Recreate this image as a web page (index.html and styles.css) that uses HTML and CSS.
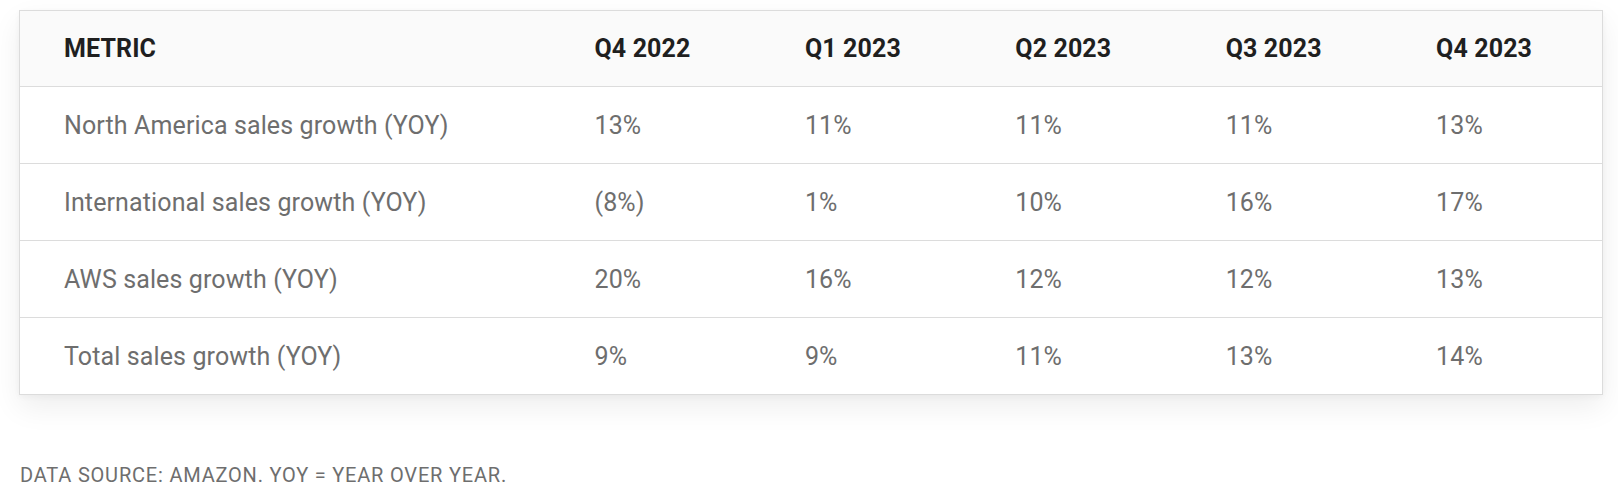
FILE: index.html
```html
<!DOCTYPE html>
<html lang="en">
<head>
<meta charset="utf-8">
<title>Amazon sales growth</title>
<link rel="stylesheet" href="styles.css">
</head>
<body>
<div class="card">
  <table class="data-table">
    <colgroup>
      <col class="col-metric">
      <col><col><col><col><col>
    </colgroup>
    <thead>
      <tr>
        <th>METRIC</th>
        <th>Q4 2022</th>
        <th>Q1 2023</th>
        <th>Q2 2023</th>
        <th>Q3 2023</th>
        <th>Q4 2023</th>
      </tr>
    </thead>
    <tbody>
      <tr>
        <td>North America sales growth (YOY)</td>
        <td>13%</td><td>11%</td><td>11%</td><td>11%</td><td>13%</td>
      </tr>
      <tr>
        <td>International sales growth (YOY)</td>
        <td>(8%)</td><td>1%</td><td>10%</td><td>16%</td><td>17%</td>
      </tr>
      <tr>
        <td>AWS sales growth (YOY)</td>
        <td>20%</td><td>16%</td><td>12%</td><td>12%</td><td>13%</td>
      </tr>
      <tr>
        <td>Total sales growth (YOY)</td>
        <td>9%</td><td>9%</td><td>11%</td><td>13%</td><td>14%</td>
      </tr>
    </tbody>
  </table>
</div>
<p class="source">DATA SOURCE: AMAZON. YOY = YEAR OVER YEAR.</p>
</body>
</html>
```

FILE: styles.css
```css
html, body {
  margin: 0;
  padding: 0;
  background: #ffffff;
}

body {
  padding: 10px 15px 0 19px;
  font-family: Roboto, "Liberation Sans", Arial, sans-serif;
}

.card {
  width: 1584px;
  box-shadow: 0 12px 28px rgba(0, 0, 0, 0.07), 0 2px 6px rgba(0, 0, 0, 0.04);
}

.data-table {
  width: 100%;
  border-collapse: collapse;
  table-layout: fixed;
  border: 1px solid #dcdcdc;
  background: #ffffff;
}

.col-metric {
  width: 531px;
}

.data-table th,
.data-table td {
  text-align: left;
  padding: 0 0 0 44px;
  font-size: 25px;
  letter-spacing: 0.12px;
  white-space: nowrap;
}

.data-table th {
  height: 75px;
  background: #fafafa;
  color: #1f1f1f;
  font-weight: 700;
  border-bottom: 1px solid #dcdcdc;
}

.data-table td {
  height: 76px;
  color: #6e6e6e;
  font-weight: 400;
  border-bottom: 1px solid #dcdcdc;
}

.data-table tbody tr:last-child td {
  border-bottom: none;
}

.source {
  margin: 68px 0 0 1px;
  font-size: 20px;
  letter-spacing: 0.8px;
  color: #6e6e6e;
  line-height: 24px;
}
```
